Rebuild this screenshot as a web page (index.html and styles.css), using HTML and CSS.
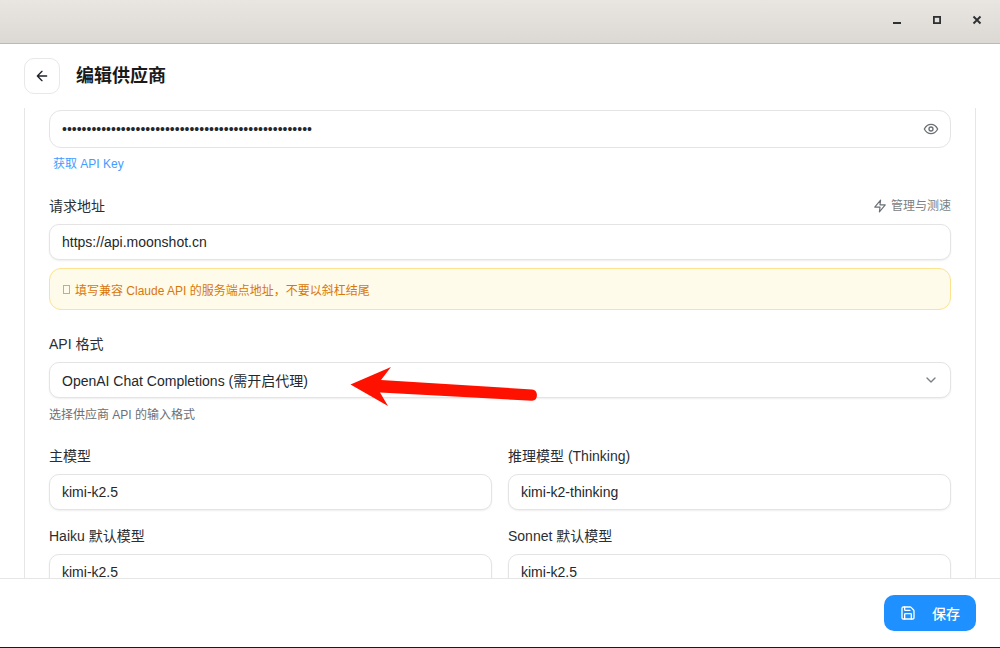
FILE: index.html
```html
<!DOCTYPE html>
<html lang="zh-CN">
<head>
<meta charset="utf-8">
<title>编辑供应商</title>
<link rel="stylesheet" href="styles.css">
</head>
<body>
<div class="window">
  <div class="titlebar">
    <button class="wm"><svg width="10" height="10" viewBox="0 0 10 10"><rect x="1" y="7" width="8" height="2" fill="#2e3033"/></svg></button>
    <button class="wm"><svg width="10" height="10" viewBox="0 0 10 10"><rect x="1.9" y="1.9" width="6.2" height="6.2" fill="none" stroke="#2e3033" stroke-width="1.8"/></svg></button>
    <button class="wm"><svg width="10" height="10" viewBox="0 0 10 10"><path d="M1.5 1.5l7 7M8.500 1.5l-7 7" stroke="#2e3033" stroke-width="1.9" fill="none"/></svg></button>
  </div>
  <header class="head">
    <button class="back"><svg width="16" height="16" viewBox="0 0 24 24" fill="none" stroke="#1f2328" stroke-width="2" stroke-linecap="round" stroke-linejoin="round"><path d="M12 19l-7-7 7-7M19 12H5"/></svg></button>
    <h1>编辑供应商</h1>
  </header>
  <main class="scroll">
    <div class="card">
      <div class="field first">
        <div class="input tall"><span class="dots">•••••••••••••••••••••••••••••••••••••••••••••••••••</span>
          <svg class="eye" width="16" height="16" viewBox="0 0 24 24" fill="none" stroke="#6b7075" stroke-width="2" stroke-linecap="round" stroke-linejoin="round"><path d="M2 12s3.600-7 10-7 10 7 10 7-3.600 7-10 7-10-7-10-7z"/><circle cx="12" cy="12" r="3"/></svg>
        </div>
        <a class="link">获取 API Key</a>
      </div>
      <div class="field url">
        <div class="label-row"><label>请求地址</label>
          <span class="manage"><svg width="14" height="14" viewBox="0 0 24 24" fill="none" stroke="#6b7075" stroke-width="2" stroke-linecap="round" stroke-linejoin="round"><path d="M13 2L3 14h9l-1 8 10-12h-9l1-8z"/></svg>管理与测速</span>
        </div>
        <div class="input">https://api.moonshot.cn</div>
        <div class="alert"><span class="tofu"></span>填写兼容 Claude API 的服务端点地址，不要以斜杠结尾</div>
      </div>
      <div class="field format">
        <label>API 格式</label>
        <div class="input">OpenAI Chat Completions (需开启代理)
          <svg class="chev" width="16" height="16" viewBox="0 0 24 24" fill="none" stroke="#7a7f85" stroke-width="2" stroke-linecap="round" stroke-linejoin="round"><path d="M6 9l6 6 6-6"/></svg>
        </div>
        <p class="hint">选择供应商 API 的输入格式</p>
      </div>
      <div class="grid">
        <div class="cell"><label>主模型</label><div class="input">kimi-k2.5</div></div>
        <div class="cell"><label>推理模型 (Thinking)</label><div class="input">kimi-k2-thinking</div></div>
        <div class="cell"><label>Haiku 默认模型</label><div class="input">kimi-k2.5</div></div>
        <div class="cell"><label>Sonnet 默认模型</label><div class="input">kimi-k2.5</div></div>
      </div>
    </div>
  </main>
  <footer class="foot">
    <button class="save"><svg width="16" height="16" viewBox="0 0 24 24" fill="none" stroke="#fff" stroke-width="2" stroke-linecap="round" stroke-linejoin="round"><path d="M15.200 3a2 2 0 0 1 1.400.6l3.800 3.800a2 2 0 0 1 .6 1.400V19a2 2 0 0 1-2 2H5a2 2 0 0 1-2-2V5a2 2 0 0 1 2-2z"/><path d="M17 21v-7a1 1 0 0 0-1-1H8a1 1 0 0 0-1 1v7"/><path d="M7 3v4a1 1 0 0 0 1 1h7"/></svg>保存</button>
  </footer>
  <svg class="arrow" width="190" height="42" viewBox="0 0 190 42"><path d="M.5 18.500L41 1 31 14 182 23.500A5.700 5.700 0 0 1 182 34.800L30 26.500 38 40z" fill="#ff1100"/></svg>
</div>
</body>
</html>
```
FILE: styles.css
```css
* { box-sizing: border-box; }
html, body { margin: 0; height: 100%; }
body {
  background: #fff;
  font-family: "Liberation Sans", "Noto Sans CJK SC", sans-serif;
  color: #1f2328;
  font-size: 14px;
}
button { font: inherit; }
.window {
  position: relative;
  height: 648px;
  display: flex;
  flex-direction: column;
  overflow: hidden;
  border-bottom: 1px solid #1a1a1a;
}
.titlebar {
  flex: 0 0 44px;
  display: flex;
  justify-content: flex-end;
  align-items: center;
  background: linear-gradient(#e9e6e2, #dcd8d3);
  border-bottom: 1px solid #bdb9b3;
  padding-right: 3px;
  padding-bottom: 4px;
}
.wm {
  width: 40px;
  height: 24px;
  padding: 0;
  background: none;
  border: 0;
  display: flex;
  align-items: center;
  justify-content: center;
}
.head {
  flex: 0 0 64px;
  display: flex;
  align-items: center;
  gap: 16px;
  padding: 0 24px;
}
.back {
  width: 36px;
  height: 36px;
  padding: 0;
  border: 1px solid #e8e8e8;
  border-radius: 10px;
  background: #fff;
  display: flex;
  align-items: center;
  justify-content: center;
}
h1 { margin: 0; font-size: 18px; font-weight: 600; line-height: 24px; color: #1a1a1a; }
.scroll { flex: 1; min-height: 0; overflow: hidden; padding: 0 24px; }
.card {
  border-left: 1px solid #e6e6e6;
  border-right: 1px solid #e6e6e6;
  padding: 2px 24px 40px;
}
.field, .cell { display: flex; flex-direction: column; }
label { display: block; line-height: 20px; margin-bottom: 8px; color: #2a2e33; }
.input {
  position: relative;
  height: 36px;
  display: flex;
  align-items: center;
  padding: 0 12px;
  border: 1px solid #e4e4e4;
  border-radius: 10px;
  background: #fff;
  box-shadow: 0 1px 2px rgba(0,0,0,.07);
  color: #24282c;
}
.tall { height: 38px; border-radius: 12px; box-shadow: none; }
.dots { letter-spacing: 0; font-size: 14px; }
.eye, .chev { position: absolute; right: 11px; top: 50%; transform: translateY(-50%); }
.link { display: block; margin: 8px 0 0 4px; font-size: 12px; line-height: 16px; color: #3f9dff; }
.url { margin-top: 24px; }
.label-row { display: flex; justify-content: space-between; align-items: flex-start; }
.manage { display: flex; align-items: center; gap: 4px; font-size: 12px; line-height: 20px; color: #7b7f84; }
.alert {
  margin-top: 8px;
  height: 42px;
  display: flex;
  align-items: center;
  padding: 0 13px;
  border: 1px solid #fde28f;
  border-radius: 12px;
  background: #fffbeb;
  color: #d97706;
  font-size: 12px;
}
.tofu {
  width: 7px;
  height: 9px;
  margin-right: 5px;
  border: 1px solid #e5a657;
}
.format { margin-top: 24px; }
.hint { margin: 9px 0 0; font-size: 12px; line-height: 16px; color: #6b7075; }
.grid {
  margin-top: 23px;
  display: grid;
  grid-template-columns: 1fr 1fr;
  gap: 16px;
}
.foot {
  flex: 0 0 69px;
  display: flex;
  justify-content: flex-end;
  align-items: center;
  padding: 0 24px;
  background: #fff;
  border-top: 1px solid #e6e6e6;
}
.save {
  width: 92px;
  height: 36px;
  display: flex;
  align-items: center;
  gap: 16px;
  padding: 0 16px;
  border: 0;
  border-radius: 10px;
  background: #1e90ff;
  color: #fff;
  font-weight: 500;
}
.arrow { position: absolute; left: 350px; top: 366px; }
```
